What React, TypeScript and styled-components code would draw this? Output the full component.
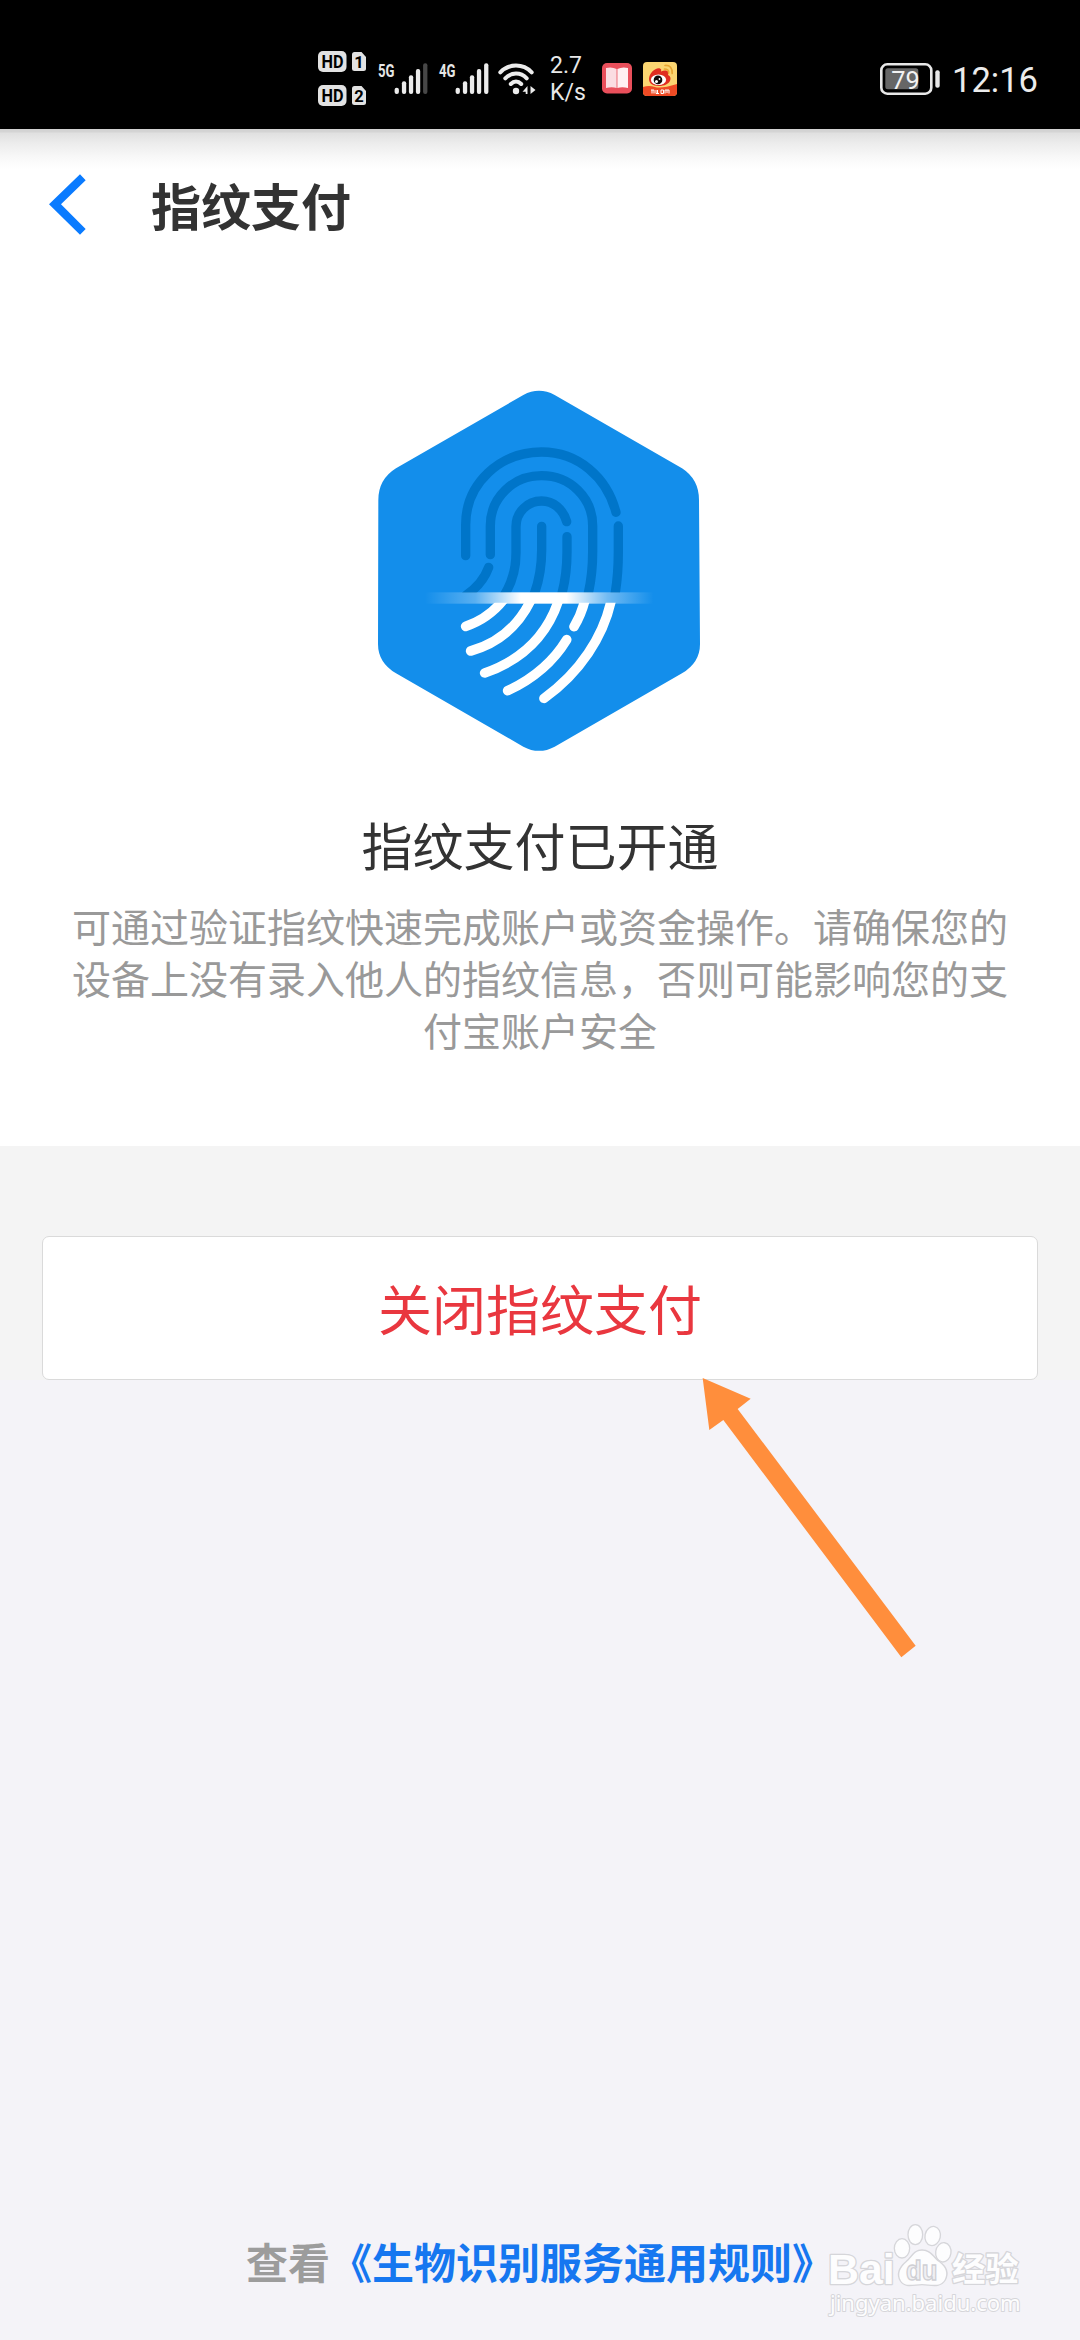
import React from "react";
import styled, { createGlobalStyle } from "styled-components";

const GlobalStyle = createGlobalStyle`
  * { box-sizing: border-box; }
  body { margin: 0; background: #f4f3f8; }
`;

const Screen = styled.div`
  position: relative;
  display: flex;
  flex-direction: column;
  width: 1080px;
  height: 2340px;
  overflow: hidden;
  background: #f4f3f8;
  font-family: "Noto Sans CJK SC", "Noto Sans", sans-serif;
`;

const StatusBar = styled.div`
  display: flex;
  align-items: center;
  justify-content: space-between;
  flex: none;
  height: 129px;
  padding: 28px 44px 0 318px;
  background: #000;
  color: #e8e8e8;
`;

const StatusGroup = styled.div<{ $gap: number }>`
  display: flex;
  align-items: center;
  gap: ${(p) => p.$gap}px;
`;

const HdColumn = styled.div`
  display: flex;
  flex-direction: column;
  gap: 13px;
`;

const Glyph = styled.svg`
  display: block;
  flex: none;
  overflow: visible;
`;

const NetSpeed = styled.div`
  width: 36px;
  margin: 0 5px 0 3px;
  font: 400 23px/27px Roboto, sans-serif;
  white-space: nowrap;
`;

const Header = styled.header`
  display: flex;
  align-items: center;
  flex: none;
  gap: 65px;
  height: 150px;
  padding: 0 49px;
  background: linear-gradient(#d2d2d2 0, #d4d4d4 3px, #e0e0e0 4px, #ededed 15px, #f8f8f8 28px, #fff 40px);
`;

const Title = styled.h1`
  margin: 0;
  color: #333;
  font-size: 50px;
  font-weight: 700;
  line-height: 72px;
`;

const Hero = styled.section`
  display: flex;
  flex-direction: column;
  align-items: center;
  flex: none;
  height: 867px;
  padding-top: 91px;
  background: #fff;
`;

const Heading = styled.h2`
  margin: 38px 0 0;
  color: #333;
  font-size: 51px;
  font-weight: 400;
  line-height: 72px;
`;

const Description = styled.p`
  width: 940px;
  margin: 19px 0 0;
  color: #999;
  font-size: 39px;
  line-height: 52.200px;
  text-align: center;
`;

const Actions = styled.section`
  flex: none;
  height: 234px;
  padding: 90px 42px 0;
  background: #f4f4f4;
`;

const CloseButton = styled.button`
  display: block;
  width: 100%;
  height: 144px;
  padding: 0;
  border: 1px solid #dadada;
  border-radius: 7px;
  background: #fff;
  color: #e9373f;
  font-family: inherit;
  font-size: 54px;
  line-height: 80px;
`;

const Footer = styled.footer`
  display: flex;
  justify-content: center;
  align-items: flex-end;
  flex: 1;
  padding-bottom: 49px;
  color: #9c9c9c;
  font-size: 42px;
  font-weight: 700;
  line-height: 60px;
`;

const RuleLink = styled.a`
  color: #1677f0;
`;

const Overlay = styled.svg<{ $x: number; $y: number }>`
  position: absolute;
  left: ${(p) => p.$x}px;
  top: ${(p) => p.$y}px;
  pointer-events: none;
`;

const HdBadge = ({ sim }: { sim: string }) => (
  <Glyph width="49" height="21" viewBox="0 0 49 21">
    <rect x="0" y="0" width="28.5" height="21" rx="5" fill="#e2e2e2" />
    <text x="3.5" y="17" textLength="22" lengthAdjust="spacingAndGlyphs" fontFamily="Roboto" fontWeight="700" fontSize="18.5" fill="#000">HD</text>
    <path d="M36.500 1H43.500L48 6V17.500Q48 20 45.500 20H36.500Q34 20 34 17.500V3.500Q34 1 36.500 1Z" fill="#e2e2e2" />
    <text x="41" y="16.500" textAnchor="middle" fontFamily="Roboto" fontWeight="700" fontSize="16.500" fill="#000">{sim}</text>
  </Glyph>
);

const SIGNAL = [
  [18.7, 24.7],
  [26, 18.3],
  [33, 12.3],
  [40, 6],
  [47.2, 0.3],
];

const Signal = ({ label, level }: { label: string; level: number }) => (
  <Glyph width="50" height="32" viewBox="0 0 50 32">
    <text x="0" y="14.200" textLength="16.500" lengthAdjust="spacingAndGlyphs" fontFamily="Roboto" fontWeight="700" fontSize="19" fill="#e6e6e6">{label}</text>
    {SIGNAL.map(([x, top], i) => (
      <rect key={x} x={x - 2.1} y={top} width="4.3" height={31 - top} rx="2" fill={i < level ? "#ececec" : "#474747"} />
    ))}
  </Glyph>
);

const Wifi = () => (
  <Glyph width="36" height="32" viewBox="2 0 36 32">
    <g fill="none" stroke="#ececec" strokeWidth="4" strokeLinecap="round">
      <path d="M2.300 9.300C11 0.300 25 0.300 33.700 9.300" />
      <path d="M7.300 15.300C13.300 9 22.700 9 28.700 15.300" />
      <path d="M12.800 21C16 17.800 20 17.800 23.200 21" />
    </g>
    <circle cx="18" cy="28" r="3.200" fill="#ececec" />
    <path d="M29.500 23V31H27.700V28.800H24.500ZM32.500 23L37.500 27L32.500 31Z" fill="#ececec" />
  </Glyph>
);

const BookApp = () => (
  <Glyph width="30" height="31" viewBox="0 0 30 31">
    <rect width="30" height="30.500" rx="5" fill="#e94f5b" />
    <path d="M4 5Q10 3.500 14.600 6V25Q10 23.500 4 25Z" fill="#fbdde2" />
    <path d="M26 5Q20 3.500 15.400 6V25Q20 23.500 26 25Z" fill="#fff0f2" />
  </Glyph>
);

const WeiboApp = () => (
  <Glyph width="34" height="34" viewBox="0 0 34 34">
    <defs>
      <clipPath id="weiboTile"><rect width="34" height="34" rx="4" /></clipPath>
    </defs>
    <g clipPath="url(#weiboTile)">
      <rect width="34" height="34" fill="#fbd571" />
      <path d="M0 25Q6 23 12 25T34 22V34H0Z" fill="#ee4a24" />
      <path d="M6 17C6 11 13 5 17 6.500C19 7.500 18 9 18 9.500C22 7.500 27 8.500 25 13C30 15 28 24 16 24C9 24 6 21 6 17Z" fill="#e02c20" />
      <ellipse cx="15.500" cy="17.700" rx="7.600" ry="5.300" fill="#fff" />
      <circle cx="15" cy="17.900" r="4.300" fill="#120a0a" />
      <circle cx="13.500" cy="19.400" r="1.500" fill="#fff" />
      <circle cx="16.500" cy="17" r="0.900" fill="#fff" />
      <path d="M22 3.500Q29.500 3 29.200 11.500M21.500 7Q26 7 25.700 11" fill="none" stroke="#e8a531" strokeWidth="1.700" strokeLinecap="round" />
      <path d="M9 28V31.500M8 28H11V31.500M13 28V31.500H16M14.500 28V31M18 28H20.500V31.500H18ZM22 31.500V28H26V31.500M24 28V31" fill="none" stroke="#fff" strokeWidth="1" />
    </g>
  </Glyph>
);

const Battery = () => (
  <Glyph width="60" height="32" viewBox="0 0 60 32">
    <rect x="1.300" y="1.300" width="50" height="29.400" rx="6" fill="none" stroke="#e8e8e8" strokeWidth="2.600" />
    <rect x="5.300" y="5.300" width="33" height="21" rx="2.500" fill="#666" />
    <rect x="55.300" y="7.300" width="4.400" height="17.500" rx="2" fill="#e8e8e8" />
    <text x="11.300" y="25.500" textLength="28.500" lengthAdjust="spacingAndGlyphs" fontFamily="Roboto" fontSize="26.500" fill="#f2f2f2">79</text>
  </Glyph>
);

const Clock = () => (
  <Glyph width="82" height="32" viewBox="0 0 82 32">
    <text x="-2" y="28.700" textLength="86" lengthAdjust="spacingAndGlyphs" fontFamily="Roboto" fontSize="35" fill="#ececec">12:16</text>
  </Glyph>
);

const BackIcon = () => (
  <Glyph width="37" height="61" viewBox="148 160 111 183">
    <path d="M241 161L258 179L184 251L258 325L241 342L148 251Z" fill="#0a7bff" />
  </Glyph>
);

const FingerprintHexagon = () => (
  <Glyph width="360" height="400" viewBox="0 0 1080 1200">
    <defs>
      <linearGradient id="scanBeam">
        <stop offset="0" stopColor="#fff" stopOpacity="0" />
        <stop offset="0.220" stopColor="#fff" stopOpacity="0.300" />
        <stop offset="0.420" stopColor="#fff" stopOpacity="1" />
        <stop offset="0.620" stopColor="#fff" stopOpacity="1" />
        <stop offset="0.800" stopColor="#fff" stopOpacity="0.400" />
        <stop offset="1" stopColor="#fff" stopOpacity="0" />
      </linearGradient>
      <clipPath id="aboveBeam"><rect width="1080" height="668" /></clipPath>
      <clipPath id="belowBeam"><rect y="698" width="1080" height="502" /></clipPath>
    </defs>
    <path d="M490 75Q537 50 584 75L966 295Q1017 328 1017 390L1020 822Q1020 878 966 910L584 1130Q537 1155 490 1130L108 910Q54 878 54 822L55 390Q55 328 108 295Z" fill="#138eeb" />
    <g clipPath="url(#aboveBeam)" fill="none" stroke="#0075c9" strokeWidth="28" strokeLinecap="round">
      <path d="M317 557V465C317 340 420 246 545 246C655 246 741 322 768 427" />
      <path d="M391 554V468C391 382 460 317 545 317C630 317 698 382 698 468V545C698 600 692 645 680 690" />
      <path d="M386 592C374 625 350 654 318 676" />
      <path d="M620 455C609 417 580 393 545 393C502 393 468 427 468 470V548C468 596 456 640 430 680" />
      <path d="M545 469V540C545 590 537 638 518 684" />
      <path d="M621 500V545C621 592 616 636 603 681" />
      <path d="M775 468V545C775 590 773 632 763 684" />
    </g>
    <g clipPath="url(#belowBeam)" fill="none" stroke="#fff" strokeWidth="29" strokeLinecap="round">
      <path d="M317 769C366 753 400 727 430 690" />
      <path d="M332 843C415 820 475 768 513 690" />
      <path d="M374 909C480 872 560 800 596 690" />
      <path d="M443 962C520 926 578 878 620 809" />
      <path d="M642 770Q664 734 675 690" />
      <path d="M552 985C660 908 730 800 754 690" />
    </g>
    <rect x="195" y="667" width="685" height="34" fill="url(#scanBeam)" />
  </Glyph>
);

const Watermark = () => (
  <Overlay $x={800} $y={2200} width="280" height="140" viewBox="0 0 840 420">
    <g fill="#fdfdfe" stroke="#d6d6da" strokeWidth="8" paintOrder="stroke" strokeLinejoin="round">
      <text x="84" y="252" textLength="200" lengthAdjust="spacingAndGlyphs" fontFamily="Liberation Sans" fontWeight="700" fontSize="130">Bai</text>
      <ellipse cx="306" cy="145" rx="21" ry="27" />
      <ellipse cx="346" cy="104" rx="20" ry="28" />
      <ellipse cx="398" cy="108" rx="21" ry="27" transform="rotate(12 398 108)" />
      <ellipse cx="430" cy="157" rx="21" ry="27" transform="rotate(8 430 157)" />
      <path d="M366 152C392 152 399 174 418 187C438 202 444 220 434 239C420 263 391 252 366 252C341 252 315 262 303 242C291 222 301 202 320 186C337 172 342 152 366 152Z" />
      <text x="456" y="243" textLength="200" lengthAdjust="spacingAndGlyphs" fontFamily="Noto Sans CJK SC" fontWeight="700" fontSize="100">经验</text>
      <text x="90" y="332" textLength="572" lengthAdjust="spacingAndGlyphs" fontFamily="Noto Sans" fontSize="66" strokeWidth="6">jingyan.baidu.com</text>
    </g>
    <text x="318" y="240" textLength="94" lengthAdjust="spacingAndGlyphs" fontFamily="Liberation Sans" fontSize="84" fontWeight="700" fill="#f0f0f3" stroke="#cfcfd4" strokeWidth="4">du</text>
  </Overlay>
);

const PointerArrow = () => (
  <Overlay $x={680} $y={1360} width="260" height="320" viewBox="0 0 780 960">
    <path d="M68 54L212 116L173 147L707 857L664 892L130 180L88 210Z" fill="#ff8e3c" />
  </Overlay>
);

export default function App() {
  return (
    <Screen>
      <GlobalStyle />
      <StatusBar>
        <StatusGroup $gap={11}>
          <HdColumn>
            <HdBadge sim="1" />
            <HdBadge sim="2" />
          </HdColumn>
          <Signal label="5G" level={4} />
          <Signal label="4G" level={5} />
          <Wifi />
          <NetSpeed>
            2.7
            <br />
            K/s
          </NetSpeed>
          <BookApp />
          <WeiboApp />
        </StatusGroup>
        <StatusGroup $gap={14}>
          <Battery />
          <Clock />
        </StatusGroup>
      </StatusBar>
      <Header>
        <BackIcon />
        <Title>指纹支付</Title>
      </Header>
      <Hero>
        <FingerprintHexagon />
        <Heading>指纹支付已开通</Heading>
        <Description>
          可通过验证指纹快速完成账户或资金操作。请确保您的设备上没有录入他人的指纹信息，否则可能影响您的支付宝账户安全
        </Description>
      </Hero>
      <Actions>
        <CloseButton>关闭指纹支付</CloseButton>
      </Actions>
      <Footer>
        <span>查看</span>
        <RuleLink>《生物识别服务通用规则》</RuleLink>
      </Footer>
      <PointerArrow />
      <Watermark />
    </Screen>
  );
}
